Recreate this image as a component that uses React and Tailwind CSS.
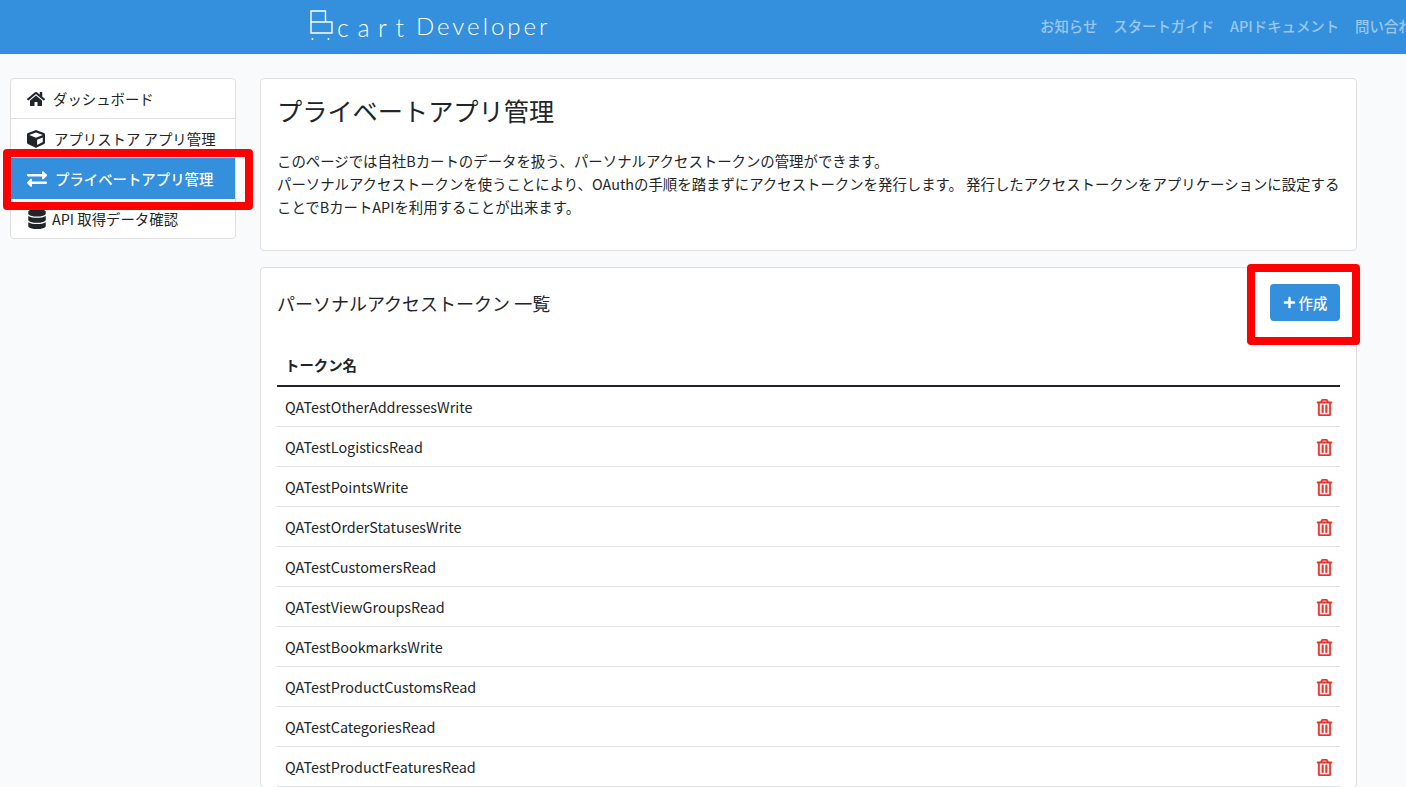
import React from "react";
import {
  FaHome,
  FaCube,
  FaExchangeAlt,
  FaDatabase,
  FaPlus,
  FaRegTrashAlt,
} from "react-icons/fa";

const tokens = [
  "QATestOtherAddressesWrite",
  "QATestLogisticsRead",
  "QATestPointsWrite",
  "QATestOrderStatusesWrite",
  "QATestCustomersRead",
  "QATestViewGroupsRead",
  "QATestBookmarksWrite",
  "QATestProductCustomsRead",
  "QATestCategoriesRead",
  "QATestProductFeaturesRead",
];

const navLinks = ["お知らせ", "スタートガイド", "APIドキュメント", "問い合わせ"];

function Logo() {
  return (
    <div className="flex items-start">
      <svg width="24" height="31" viewBox="0 0 24 31" fill="none" stroke="white" strokeWidth="1.4" className="shrink-0">
        <path d="M1 1h14.5v11H1zM1 12v11h21V12h-6.5" />
        <circle cx="2.5" cy="29" r="1" fill="white" stroke="none" />
        <circle cx="18.5" cy="29" r="1" fill="white" stroke="none" />
      </svg>
      <span className="ml-[3px] mt-[2px] w-[79px] text-[25px] leading-[30px] font-light text-white tracking-[8.6px] font-['Lato',sans-serif]">
        cart
      </span>
      <span className="mt-[1px] text-[24px] leading-[30px] font-light text-white tracking-[3px] font-['Lato',sans-serif]">
        Developer
      </span>
    </div>
  );
}

export default function App() {
  return (
    <div className="h-[787px] w-[1406px] overflow-hidden relative bg-[#f8fafc] text-[#212529] text-[14.4px] font-['Noto_Sans_CJK_JP','Noto_Sans',sans-serif]">
      {/* Header */}
      <header className="h-[54px] bg-[#3490dc] flex items-start pl-[310px] overflow-hidden">
        <div className="pt-[10px] w-[730px] shrink-0">
          <Logo />
        </div>
        <nav className="flex gap-[16px] pt-[14px] shrink-0 leading-[24px] font-medium text-white/50 whitespace-nowrap">
          {navLinks.map((link) => (
            <a key={link}>{link}</a>
          ))}
        </nav>
      </header>

      <div className="flex items-start pt-[24px] pl-[10px]">
        {/* Sidebar */}
        <aside className="w-[226px] shrink-0 bg-white border border-[#dfdfdf] rounded-[4px] overflow-hidden">
          <div className="h-[40px] flex items-center pl-[16px] gap-[8px] border-b border-[#dfdfdf]">
            <FaHome className="text-[18px]" />
            <span>ダッシュボード</span>
          </div>
          <div className="h-[39px] flex items-center pl-[16px] pt-[1px] gap-[9px] border-b border-[#dfdfdf]">
            <FaCube className="text-[18px]" />
            <span>アプリストア アプリ管理</span>
          </div>
          <div className="h-[41px] flex items-center pl-[16px] gap-[8px] bg-[#3490dc] text-white font-medium">
            <FaExchangeAlt className="text-[20px]" />
            <span>プライベートアプリ管理</span>
          </div>
          <div className="h-[39px] flex items-center pl-[16px] gap-[5px]">
            <FaDatabase className="text-[20px]" />
            <span>API 取得データ確認</span>
          </div>
        </aside>

        {/* Main */}
        <main className="ml-[24px] w-[1097px] shrink-0">
          <section className="h-[173px] bg-white border border-[#dfdfdf] rounded-[4px] px-[16px] pt-[13px]">
            <h1 className="text-[25.2px] leading-[36px] font-normal">プライベートアプリ管理</h1>
            <p className="mt-[21px] leading-[23px]">
              このページでは自社Bカートのデータを扱う、パーソナルアクセストークンの管理ができます。
              <br />
              パーソナルアクセストークンを使うことにより、OAuthの手順を踏まずにアクセストークンを発行します。 発行したアクセストークンをアプリケーションに設定することでBカートAPIを利用することが出来ます。
            </p>
          </section>

          <section className="mt-[16px] bg-white border border-[#dfdfdf] rounded-[4px] px-[16px] pt-[16px]">
            <div className="flex items-center justify-between h-[37px]">
              <h2 className="text-[18px] leading-[24px] font-normal">パーソナルアクセストークン 一覧</h2>
              <button className="w-[70px] h-[37px] flex items-center justify-center gap-[3px] bg-[#3490dc] text-white rounded-[4px] font-medium">
                <FaPlus className="text-[13px]" />
                作成
              </button>
            </div>
            <div className="mt-[34px] h-[32px] px-[8px] border-b-2 border-[#212529] font-bold leading-[20px]">トークン名</div>
            {tokens.map((name) => (
              <div key={name} className="h-[40px] flex items-center justify-between pl-[8px] pr-[7px] border-b border-[#dee2e6]">
                <span>{name}</span>
                <FaRegTrashAlt className="mt-[2px] text-[17px] text-[#e3342f] stroke-[14]" />
              </div>
            ))}
          </section>
        </main>
      </div>

      {/* Red annotation boxes */}
      <div className="absolute left-[3px] top-[149px] w-[250px] h-[61px] border-[8px] border-[#ff0000] rounded-[4px]" />
      <div className="absolute left-[1247px] top-[264px] w-[113px] h-[81px] border-[8px] border-[#ff0000] rounded-[4px]" />
    </div>
  );
}
